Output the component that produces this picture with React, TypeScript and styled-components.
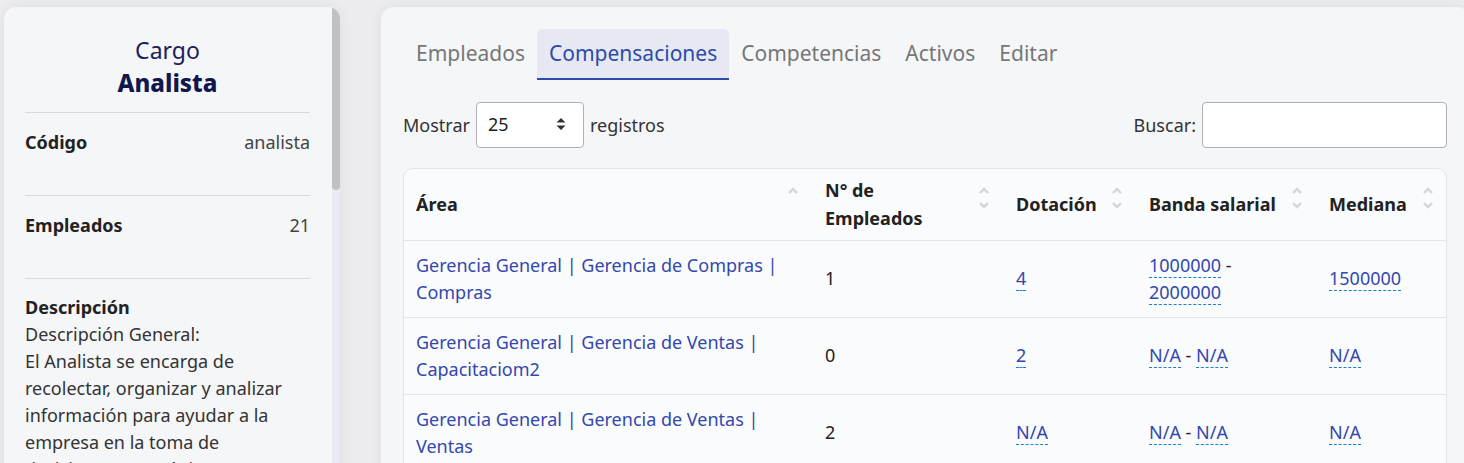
import styled, { createGlobalStyle } from "styled-components";

const GlobalStyle = createGlobalStyle`
    html, body {
        margin: 0;
        padding: 0;
        background: #ececee;
        overflow: hidden;
        font-family: "Noto Sans", sans-serif;
        color: #212529;
    }
    * { box-sizing: border-box; }
`;

const Page = styled.div`
    display: flex;
    align-items: flex-start;
    gap: 41px;
    padding: 7px 0 0 4px;
    height: 463px;
`;

const SideCard = styled.aside`
    flex: none;
    display: flex;
    width: 336px;
    height: 520px;
    background: #f5f6f8;
    border-radius: 12px;
    box-shadow: 0 0 14px rgba(0, 0, 0, 0.06);
    overflow: hidden;
`;

const SideContent = styled.div`
    flex: 1;
    padding: 27px 22px 0 21px;
`;

const ScrollTrack = styled.div`
    flex: none;
    width: 8px;
    background: #e9e9f4;
`;

const ScrollThumb = styled.div`
    height: 183px;
    background: #c1c1c1;
    border-radius: 0 0 4px 4px;
`;

const CargoHead = styled.div`
    text-align: center;
    color: #1b1f5c;
    padding-bottom: 13px;
    border-bottom: 1px solid #d9d9dc;
`;

const CargoLabel = styled.div`
    font-size: 23px;
    line-height: 32px;
`;

const CargoName = styled.div`
    font-size: 24px;
    line-height: 33px;
    font-weight: 800;
    color: #12164f;
`;

const InfoRow = styled.div`
    display: flex;
    justify-content: space-between;
    padding: 17px 0 41px;
    border-bottom: 1px solid #d9d9dc;
    font-size: 18px;
    line-height: 24px;
`;

const InfoLabel = styled.span`
    font-weight: 700;
    color: #222;
`;

const InfoValue = styled.span`
    color: #444;
`;

const Description = styled.div`
    padding-top: 15px;
    font-size: 18px;
    line-height: 27px;
    color: #333;
`;

const MainCard = styled.main`
    flex: none;
    width: 1088px;
    background: #f5f6f8;
    border-radius: 12px;
    box-shadow: 0 0 14px rgba(0, 0, 0, 0.06);
    padding: 22px 22px 0 22px;
    height: 470px;
`;

const Tabs = styled.nav`
    display: flex;
    padding-left: 1px;
`;

const Tab = styled.div<{ $active?: boolean }>`
    padding: 0 12px 2px;
    height: 51px;
    display: flex;
    align-items: center;
    font-size: 21px;
    color: ${p => (p.$active ? "#2f4aa8" : "#777")};
    background: ${p => (p.$active ? "#e6e9f3" : "transparent")};
    border-radius: 5px 5px 0 0;
    border-bottom: 2px solid ${p => (p.$active ? "#2f4aa8" : "transparent")};
`;

const Controls = styled.div`
    display: flex;
    justify-content: space-between;
    align-items: center;
    margin-top: 22px;
    font-size: 18px;
    color: #333;
`;

const Group = styled.label`
    display: flex;
    align-items: center;
    gap: 6px;
    padding-bottom: 2px;
`;

const SelectBox = styled.div`
    width: 108px;
    height: 46px;
    border: 1px solid #b0b0b4;
    border-radius: 4px;
    background: #fff;
    display: flex;
    align-items: center;
    justify-content: space-between;
    padding: 0 16px 2px 11px;
    color: #222;
`;

const SearchInput = styled.div`
    width: 245px;
    height: 46px;
    border: 1px solid #b0b0b4;
    border-radius: 4px;
    background: #fff;
`;

const TableWrap = styled.div`
    margin-top: 18px;
    border: 1px solid #e4e5e8;
    border-radius: 10px;
    background: #fafbfc;
    overflow: hidden;
`;

const Table = styled.table`
    width: 100%;
    border-collapse: collapse;
    font-size: 18px;
    table-layout: fixed;
`;

const Th = styled.th<{ $w: number }>`
    width: ${p => p.$w}px;
    text-align: left;
    font-weight: 700;
    color: #222;
    padding: 0 32px 0 12px;
    height: 71px;
    line-height: 28px;
    position: relative;
    border-bottom: 1px solid #e4e5e8;
`;

const Td = styled.td`
    padding: 0 12px;
    height: 77px;
    line-height: 27px;
    color: #222;
    border-bottom: 1px solid #e4e5e8;
    vertical-align: middle;
`;

const AreaLink = styled.span`
    color: #3348ad;
`;

const Num = styled.span`
    color: #3348ad;
    border-bottom: 1px dashed #1b7fd1;
`;

const SortIcon = styled.svg`
    position: absolute;
    right: 14px;
    top: 16px;
`;

const Dash = styled.span`
    color: #222;
`;

function Sort({ upOnly }: { upOnly?: boolean }) {
    return (
        <SortIcon width="12" height="26" viewBox="0 0 12 26">
            <path d="M2 8 L6 4 L10 8" stroke="#d6d6d8" strokeWidth="2.4" fill="none" />
            {!upOnly && <path d="M2 18 L6 22 L10 18" stroke="#d6d6d8" strokeWidth="2.4" fill="none" />}
        </SortIcon>
    );
}

const rows = [
    { area: "Gerencia General | Gerencia de Compras | Compras", n: "1", dot: "4", min: "1000000", max: "2000000", med: "1500000" },
    { area: "Gerencia General | Gerencia de Ventas | Capacitaciom2", n: "0", dot: "2", min: "N/A", max: "N/A", med: "N/A" },
    { area: "Gerencia General | Gerencia de Ventas | Ventas", n: "2", dot: "N/A", min: "N/A", max: "N/A", med: "N/A" },
];

export default function App() {
    return (
        <>
            <GlobalStyle />
            <Page>
                <SideCard>
                    <SideContent>
                        <CargoHead>
                            <CargoLabel>Cargo</CargoLabel>
                            <CargoName>Analista</CargoName>
                        </CargoHead>
                        <InfoRow>
                            <InfoLabel>Código</InfoLabel>
                            <InfoValue>analista</InfoValue>
                        </InfoRow>
                        <InfoRow>
                            <InfoLabel>Empleados</InfoLabel>
                            <InfoValue>21</InfoValue>
                        </InfoRow>
                        <Description>
                            <InfoLabel>Descripción</InfoLabel>
                            <br />
                            Descripción General:
                            <br />
                            El Analista se encarga de recolectar, organizar y analizar información para ayudar a la empresa en la toma de decisiones estratégicas. Es responsable de identificar tendencias y elaborar reportes.
                        </Description>
                    </SideContent>
                    <ScrollTrack>
                        <ScrollThumb />
                    </ScrollTrack>
                </SideCard>

                <MainCard>
                    <Tabs>
                        <Tab>Empleados</Tab>
                        <Tab $active>Compensaciones</Tab>
                        <Tab>Competencias</Tab>
                        <Tab>Activos</Tab>
                        <Tab>Editar</Tab>
                    </Tabs>

                    <Controls>
                        <Group>
                            Mostrar
                            <SelectBox>
                                25
                                <svg width="12" height="16" viewBox="0 0 12 16">
                                    <path d="M1.5 6.5 L6 2 L10.5 6.5 Z M1.5 9.5 L6 14 L10.5 9.5 Z" fill="#333" />
                                </svg>
                            </SelectBox>
                            registros
                        </Group>
                        <Group>
                            Buscar:
                            <SearchInput />
                        </Group>
                    </Controls>

                    <TableWrap>
                        <Table>
                            <thead>
                                <tr>
                                    <Th $w={409}>Área<Sort upOnly /></Th>
                                    <Th $w={191}>N° de Empleados<Sort /></Th>
                                    <Th $w={133}>Dotación<Sort /></Th>
                                    <Th $w={180}>Banda salarial<Sort /></Th>
                                    <Th $w={131}>Mediana<Sort /></Th>
                                </tr>
                            </thead>
                            <tbody>
                                {rows.map(r => (
                                    <tr key={r.area}>
                                        <Td><AreaLink>{r.area}</AreaLink></Td>
                                        <Td>{r.n}</Td>
                                        <Td><Num>{r.dot}</Num></Td>
                                        <Td><Num>{r.min}</Num> <Dash>-</Dash> <Num>{r.max}</Num></Td>
                                        <Td><Num>{r.med}</Num></Td>
                                    </tr>
                                ))}
                            </tbody>
                        </Table>
                    </TableWrap>
                </MainCard>
            </Page>
        </>
    );
}
